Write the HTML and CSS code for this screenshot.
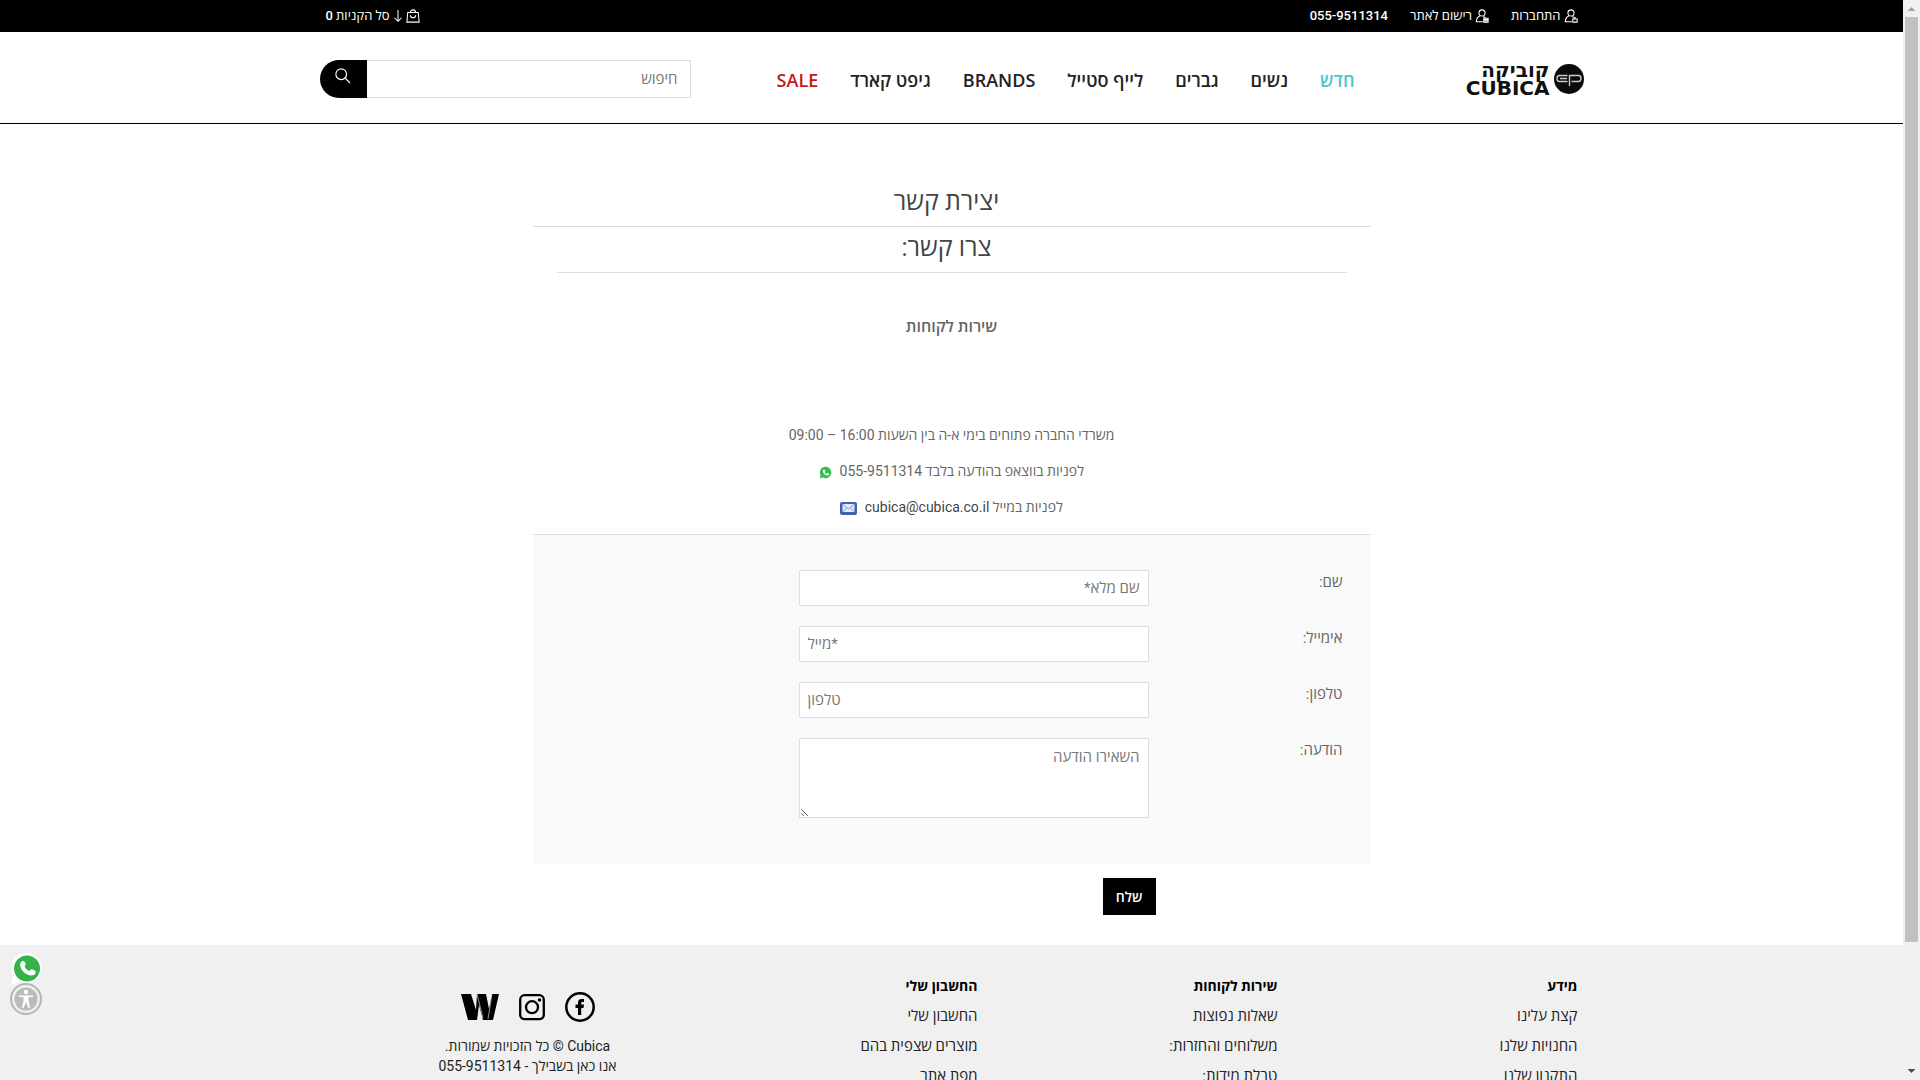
FILE: index.html
```html
<!DOCTYPE html>
<html lang="he">
<head>
    <meta charset="UTF-8">
    <meta name="viewport" content="width=device-width, initial-scale=1.0">
    <title>יצירת קשר - Cubica</title>
    <link rel="stylesheet" href="styles.css">
</head>
<body>
    <div class="page" dir="rtl">
        <div class="topbar">
            <div class="container inset topbar-inner">
                <a href="#">
                    <svg class="icon" viewBox="0 0 16 16"><circle cx="8" cy="4.500" r="3.500"/><path d="M5.500 8C3 9 1.500 11 1.500 14.500H9M9.500 8.500c1 .3 2 .8 2.500 1.500M10 11.500h5v3.500h-5zM11.500 11.500v-1.500h2"/></svg>
                    התחברות
                </a>
                <a href="#">
                    <svg class="icon" viewBox="0 0 16 16"><circle cx="8" cy="4.500" r="3.500"/><path d="M5.500 8C3 9 1.500 11 1.500 14.500H9M9.500 8.500c1 .3 2 .8 2.500 1.500M10 10.500h5v4.500h-5zM10 12h5M10 13.500h5"/></svg>
                    רישום לאתר
                </a>
                <a href="tel:055-9511314">055-9511314</a>
                <a href="#" class="cart">
                    <svg class="icon" viewBox="0 0 16 16"><path d="M2 4h12l1 11h-14zM5 4c0-4 6-4 6 0M5 7c0 4 6 4 6 0"/></svg>
                    <svg class="icon icon-arrow" viewBox="0 0 10 16"><path d="M5 1v13M1 10l4 4 4-4"/></svg>
                    סל הקניות 0
                </a>
            </div>
        </div>

        <header class="header">
            <div class="container header-inner">
                <a href="#" class="logo">
                    <svg class="logo-mark" viewBox="0 0 30 30"><circle cx="15" cy="15" r="15" fill="#0d0a0b"/><path d="M13.500 17.500H5.500Q3 17.500 3 14.500T5.500 11.500H13.500M15.500 22V11.500H24.500Q27 11.500 27 14.500T24.500 17.500H17.500M6 14.500H13" fill="none" stroke="#ccc" stroke-width="1.400"/></svg>
                    <span class="logo-text">
                        <span>קוביקה</span>
                        <span>CUBICA</span>
                    </span>
                </a>
                <nav class="nav">
                    <a href="#" class="new">חדש</a>
                    <a href="#">נשים</a>
                    <a href="#">גברים</a>
                    <a href="#">לייף סטייל</a>
                    <a href="#">BRANDS</a>
                    <a href="#">גיפט קארד</a>
                    <a href="#" class="sale">SALE</a>
                </nav>
                <form class="search">
                    <input type="text" placeholder="חיפוש" aria-label="חיפוש">
                    <button type="button" aria-label="חיפוש">
                        <svg viewBox="0 0 18 18"><circle cx="7" cy="7" r="6"/><path d="M11.500 11.500L17 17"/></svg>
                    </button>
                </form>
            </div>
        </header>

        <main class="contact">
            <h1>יצירת קשר</h1>
            <h2>צרו קשר:</h2>
            <h3>שירות לקוחות</h3>
            <div class="info">
                <p>משרדי החברה פתוחים בימי א-ה בין השעות 16:00 – 09:00</p>
                <p>
                    לפניות בווצאפ בהודעה בלבד 055-9511314
                    <svg class="info-wa" viewBox="0 0 32 32"><path fill="#35bf4c" d="M16 2a14 14 0 1 1-6 26.500L2 30l1.700-7.500A14 14 0 0 1 16 2z"/><path fill="#fff" d="M11 9c-5 5 5 16 12 14 2-1 2.500-3 2-4l-4-2-2 2c-3-1-4.500-3-5-5l1.500-1.500L14 9z"/></svg>
                </p>
                <p>
                    לפניות במייל <a href="mailto:cubica@cubica.co.il">cubica@cubica.co.il</a>
                    <svg class="info-mail" viewBox="0 0 17 13"><rect width="17" height="13" rx="2" fill="#3f62b0"/><rect x="2.500" y="2" width="12" height="8" fill="#dfe9fa"/><path d="M2.500 2l6 5 6-5M2.500 10l4-4M14.500 10l-4-4" fill="none" stroke="#7d9ad3"/></svg>
                </p>
            </div>
            <form>
                <div class="fields">
                    <div class="row">
                        <label for="name">שם:</label>
                        <input type="text" id="name" placeholder="שם מלא*">
                    </div>
                    <div class="row">
                        <label for="email">אימייל:</label>
                        <input type="email" id="email" dir="ltr" placeholder="&rlm;*מייל">
                    </div>
                    <div class="row">
                        <label for="phone">טלפון:</label>
                        <input type="tel" id="phone" dir="ltr" placeholder="טלפון">
                    </div>
                    <div class="row">
                        <label for="message">הודעה:</label>
                        <textarea id="message" placeholder="השאירו הודעה"></textarea>
                    </div>
                </div>
                <button type="button" class="send">שלח</button>
            </form>
        </main>

        <footer class="footer">
            <div class="container inset footer-inner">
                <div class="footer-col">
                    <h4>מידע</h4>
                    <a href="#">קצת עלינו</a>
                    <a href="#">החנויות שלנו</a>
                    <a href="#">התקנון שלנו</a>
                </div>
                <div class="footer-col">
                    <h4>שירות לקוחות</h4>
                    <a href="#">שאלות נפוצות</a>
                    <a href="#">משלוחים והחזרות:</a>
                    <a href="#">טבלת מידות:</a>
                </div>
                <div class="footer-col">
                    <h4>החשבון שלי</h4>
                    <a href="#">החשבון שלי</a>
                    <a href="#">מוצרים שצפית בהם</a>
                    <a href="#">מפת אתר</a>
                </div>
                <div class="footer-col social-col">
                    <div class="social">
                        <a href="#" aria-label="Facebook"><svg width="30" height="30" viewBox="0 0 30 30"><circle cx="15" cy="15" r="13.700" fill="none" stroke="#000" stroke-width="2.500"/><path d="M13 23v-7h-2.500v-3.500H13v-2C13 8 14.500 7 16.500 7H19v3h-1.500c-1 0-1.300.5-1.300 1.300v1.200H19l-.5 3.500h-2.300v7z"/></svg></a>
                        <a href="#" aria-label="Instagram"><svg width="26" height="28" viewBox="0 0 26 28"><g fill="none" stroke="#000" stroke-width="2.300"><rect x="1.200" y="2.200" width="23.600" height="24" rx="4.500"/><circle cx="13" cy="14.200" r="6"/></g><circle cx="20.500" cy="7" r="1.800"/></svg></a>
                        <a href="#" aria-label="Wolt"><svg width="38" height="26" viewBox="0 0 38 26"><path d="M0 0h10l5 16 1-16h9l3 15 3-15h7l-6 26h-10l-4-15-2 15H7z"/><path d="M16 0l6 24M31 0l-4 25" fill="none" stroke="#f0f0f0" stroke-width=".6"/></svg></a>
                    </div>
                    <p>Cubica © כל הזכויות שמורות.</p>
                    <p>אנו כאן בשבילך - 055-9511314</p>
                </div>
            </div>
        </footer>
    </div>

    <div class="scrollbar" aria-hidden="true">
        <svg viewBox="0 0 17 17"><path d="M4.500 11l4-4 4 4z" fill="#a3a3a3"/></svg>
        <div class="track"><div class="thumb"></div></div>
        <svg viewBox="0 0 17 17"><path d="M4.500 6l4 4 4-4z" fill="#505050"/></svg>
    </div>

    <div class="floating">
        <a href="#" aria-label="WhatsApp"><svg width="32" height="32" viewBox="0 0 32 32"><path fill="#fff" d="M17 0a15 15 0 1 1-6.500 28.500L1 32l2.500-9A15 15 0 0 1 17 0z"/><circle cx="17" cy="15.500" r="13" fill="#35b24a"/><path fill="#fff" d="M12 8c-6 5 4 17 12 14 1.500-1 2-3 1.500-4l-4-2-2 2c-3-1-4.500-3-5-5l1.500-1.500L14 8z"/></svg></a>
        <button type="button" aria-label="נגישות"><svg width="32" height="32" viewBox="0 0 32 32"><circle cx="16" cy="16" r="15" fill="#eee" stroke="#b5b5b5" stroke-width="2"/><circle cx="16" cy="16" r="11.500" fill="#bbb"/><circle cx="16" cy="9" r="2.200" fill="#fff"/><path d="M9 12.500h14v1.500h-4.500V18l1.500 7h-1.500l-2.500-6-2.500 6h-1.500l1.500-7v-4H9z" fill="#fff"/></svg></button>
    </div>
</body>
</html>
```
FILE: styles.css
```css
* {
    margin: 0;
    padding: 0;
    box-sizing: border-box;
}

body {
    display: flex;
    height: 100vh;
    overflow: hidden;
    font-family: Roboto, "Open Sans", "Noto Sans", sans-serif;
    font-size: 14px;
    line-height: 20px;
    color: #666;
    background: #fff;
}

a {
    color: inherit;
    text-decoration: none;
}

input,
textarea,
button {
    font: inherit;
}

.page {
    flex: 1;
    min-width: 0;
    overflow-y: auto;
    scrollbar-width: none;
}

.container {
    width: 100%;
    max-width: 1264px;
    margin: 0 auto;
}

.inset {
    padding: 0 6px;
}

/* Scrollbar */
.scrollbar {
    display: flex;
    flex-direction: column;
    width: 17px;
    background: #f1f1f1;
}

.scrollbar svg {
    width: 17px;
    height: 17px;
}

.track {
    flex: 1;
    padding: 0 2px;
}

.thumb {
    height: 88.4%;
    background: #c1c1c1;
}

/* Top bar */
.topbar {
    background: #000;
    color: #fff;
    font-size: 13px;
    font-weight: 500;
}

.topbar-inner {
    display: flex;
    align-items: center;
    gap: 22px;
    height: 32px;
}

.topbar a {
    display: flex;
    align-items: center;
    gap: 3px;
}

.topbar .cart {
    margin-right: auto;
}

.icon {
    width: 14px;
    height: 14px;
    fill: none;
    stroke: #fff;
    stroke-width: 1.2;
}

.icon-arrow {
    width: 10px;
}

/* Header */
.header {
    border-bottom: 1px solid #000;
}

.header-inner {
    display: flex;
    align-items: center;
    height: 91px;
    padding-top: 2px;
}

.logo {
    display: flex;
    align-items: center;
    gap: 4px;
    width: 229px;
    color: #111;
}

.logo-mark {
    width: 30px;
    height: 30px;
}

.logo-text {
    display: flex;
    flex-direction: column;
    font-family: "DejaVu Sans", sans-serif;
    font-size: 20px;
    font-weight: 700;
    line-height: 18px;
}

.nav {
    display: flex;
    gap: 32px;
    padding-top: 2px;
    font-family: "Open Sans", "Noto Sans", sans-serif;
    font-size: 18px;
    font-weight: 600;
    color: #222;
}

.nav .new {
    color: #4cc5d2;
}

.nav .sale {
    color: #c4161c;
}

.search {
    display: flex;
    width: 371px;
    height: 38px;
    margin-right: auto;
    font-size: 15px;
}

.search input {
    flex: 1;
    min-width: 0;
    padding: 0 12px;
    border: 1px solid #ddd;
    border-left: 0;
    outline: none;
}

.search button {
    width: 47px;
    border: 0;
    border-radius: 19px 0 0 19px;
    background: #000;
    cursor: pointer;
}

.search svg {
    width: 16px;
    height: 16px;
    fill: none;
    stroke: #fff;
    stroke-width: 1.3;
}

::placeholder {
    color: #777;
    opacity: 1;
}

/* Contact page */
.contact {
    max-width: 838px;
    margin: 0 auto;
    padding: 57px 0 30px;
}

.contact h1,
.contact h2 {
    padding: 0 10px 3px 0;
    border-bottom: 1px solid #ddd;
    font-size: 25px;
    font-weight: 400;
    line-height: 42px;
    text-align: center;
    color: #444;
}

.contact h2 {
    margin: 0 24px;
}

.contact h3 {
    margin-top: 44px;
    font-size: 16px;
    font-weight: 600;
    line-height: 20px;
    text-align: center;
}

.info {
    padding: 80px 0 9px;
    line-height: 36px;
    text-align: center;
}

.info a {
    color: #444;
}

.info svg {
    margin-right: 4px;
    vertical-align: middle;
}

.info-wa {
    width: 13px;
    height: 13px;
}

.info-mail {
    width: 17px;
    height: 13px;
}

.fields {
    display: flex;
    flex-direction: column;
    gap: 20px;
    padding: 35px 28px 46px;
    border-top: 1px solid #ddd;
    background: #f9f9f9;
    font-size: 15px;
}

.row {
    display: flex;
}

.row label {
    width: 194px;
    line-height: 24px;
}

.row input,
.row textarea {
    width: 350px;
    height: 36px;
    padding: 0 8px;
    border: 1px solid #ddd;
    background: #fff;
    outline: none;
}

.row textarea {
    height: 80px;
    padding-top: 8px;
    resize: vertical;
}

.send {
    display: block;
    height: 37px;
    margin: 14px 215px 0 0;
    padding: 0 13px;
    border: 0;
    background: #000;
    color: #fff;
    font-weight: 600;
    cursor: pointer;
}

/* Footer */
.footer {
    padding: 26px 0 130px;
    background: #f0f0f0;
    color: #222;
}

.footer-inner {
    display: flex;
}

.footer-col {
    display: flex;
    flex-direction: column;
    width: 300px;
    font-size: 15px;
    line-height: 30px;
}

.footer-col h4 {
    font-size: 14px;
    font-weight: 700;
    color: #000;
}

.social-col {
    padding-top: 21px;
    font-size: 14px;
    line-height: 20px;
    text-align: center;
}

.social {
    display: flex;
    align-items: center;
    justify-content: center;
    gap: 20px;
    height: 30px;
    margin-bottom: 14px;
}

.social a {
    display: flex;
}

/* Floating buttons over the page corner */
.floating {
    position: fixed;
    bottom: 65px;
    left: 10px;
    display: flex;
    flex-direction: column;
}

.floating a,
.floating button {
    display: flex;
    border: 0;
    background: none;
    cursor: pointer;
}

.floating button {
    margin-top: -2px;
}

@media (max-width: 1264px) {
    .header-inner {
        flex-wrap: wrap;
        height: auto;
        padding: 16px;
        gap: 16px;
    }

    .footer-inner {
        flex-wrap: wrap;
    }
}
```
